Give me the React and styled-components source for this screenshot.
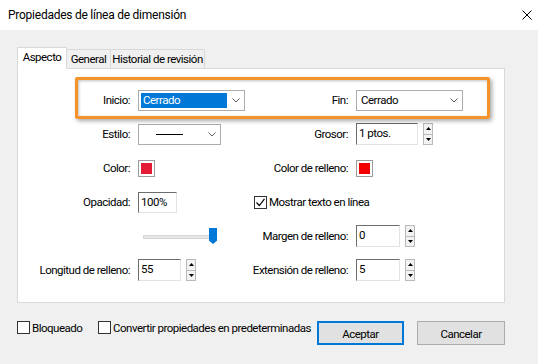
import React from 'react';
import styled, { createGlobalStyle } from 'styled-components';

const FONT = `"Roboto", "Liberation Sans", sans-serif`;

const Global = createGlobalStyle`
  html, body { margin: 0; padding: 0; background: #f0f0f0; }
  body { width: 538px; height: 364px; overflow: hidden; font-family: ${FONT}; font-size: 11.5px; letter-spacing: -0.5px; color: #000; }
  * { box-sizing: border-box; }
`;

const Window = styled.div`
  width: 538px;
  height: 364px;
  display: flex;
  flex-direction: column;
  background: #f0f0f0;
`;

const TitleBar = styled.div`
  height: 30px;
  flex: none;
  background: #fff;
  display: flex;
  align-items: center;
  justify-content: space-between;
  padding: 0 6px 0 8px;
  font-size: 12px;
  letter-spacing: -0.25px;
`;

const CloseBtn = styled.div`
  width: 10px;
  height: 10px;
  display: flex;
  align-items: center;
  justify-content: center;
  margin-bottom: 1px;
`;

const Content = styled.div`
  padding: 17px 33px 0 17px;
  display: flex;
  flex-direction: column;
`;

const TabRow = styled.div`
  display: flex;
  align-items: flex-end;
  height: 22px;
  position: relative;
  z-index: 1;
  margin-bottom: -1px;
`;

const Tab = styled.div`
  width: ${(p) => p.w}px;
  height: ${(p) => (p.active ? 22 : 20)}px;
  margin-left: ${(p) => (p.first ? 0 : -1)}px;
  border: 1px solid #d9d9d9;
  border-bottom: ${(p) => (p.active ? '1px solid #fff' : '1px solid #d9d9d9')};
  background: ${(p) => (p.active ? '#fff' : '#f0f0f0')};
  display: flex;
  align-items: center;
  justify-content: center;
  white-space: nowrap;
  padding-bottom: ${(p) => (p.active ? 3 : 0)}px;
  position: relative;
  z-index: ${(p) => (p.active ? 2 : 1)};
`;

const Panel = styled.div`
  height: 235px;
  background: #fff;
  border: 1px solid #d9d9d9;
  position: relative;
  padding-top: 20px;
`;

const Highlight = styled.div`
  position: absolute;
  left: 57px;
  top: 8px;
  width: 415px;
  height: 42px;
  border: 3px solid #f3932a;
  border-radius: 2px;
  box-shadow: 2px 2px 4px rgba(0, 0, 0, 0.35), inset 1px 1px 3px rgba(0, 0, 0, 0.25);
  pointer-events: none;
`;

const Grid = styled.div`
  display: grid;
  grid-template-columns: 112px 108px 94px 150px;
  grid-auto-rows: 22px;
  column-gap: 8px;
  row-gap: 12px;
`;

const Label = styled.div`
  justify-self: end;
  align-self: center;
  white-space: nowrap;
`;

const Cell = styled.div`
  display: flex;
  align-items: center;
  grid-column: ${(p) => p.span || 'auto'};
`;

const SelectBox = styled.div`
  width: ${(p) => p.w}px;
  height: 21px;
  border: 1px solid #acacac;
  background: #fff;
  display: flex;
  align-items: stretch;
`;

const SelectValue = styled.div`
  flex: 1;
  margin: 2px 0 2px 2px;
  padding-left: 2px;
  display: flex;
  align-items: center;
  background: ${(p) => (p.selected ? '#0078d7' : 'transparent')};
  color: ${(p) => (p.selected ? '#fff' : '#000')};
  justify-content: ${(p) => (p.center ? 'center' : 'flex-start')};
`;

const SelectArrow = styled.div`
  width: 17px;
  display: flex;
  align-items: center;
  justify-content: center;
`;

const LineSample = styled.div`
  width: 27px;
  height: 1px;
  background: #000;
  margin-right: 8px;
`;

const TextField = styled.div`
  width: ${(p) => p.w}px;
  height: ${(p) => p.h || 22}px;
  background: #fff;
  border-top: 1px solid #6d6d6d;
  border-left: 1px solid #6d6d6d;
  border-right: 1px solid #e3e3e3;
  border-bottom: 1px solid #e3e3e3;
  display: flex;
  align-items: flex-start;
  padding-left: 2px;
  padding-top: 2px;
`;

const Spinner = styled.div`
  width: 10px;
  height: 22px;
  margin-left: 5px;
  display: flex;
  flex-direction: column;
`;

const SpinBtn = styled.div`
  flex: 1;
  border: 1px solid #b9b9b9;
  background: #f3f3f3;
  margin-top: ${(p) => (p.down ? -1 : 0)}px;
  display: flex;
  align-items: center;
  justify-content: center;
`;

const Swatch = styled.div`
  width: 17px;
  height: 17px;
  border: 1px solid #9c9c9c;
  background: #fff;
  padding: 2px;
`;

const SwatchFill = styled.div`
  width: 100%;
  height: 100%;
  background: ${(p) => p.color};
`;

const CheckLabel = styled.label`
  display: flex;
  align-items: center;
  gap: 2px;
  white-space: nowrap;
  flex: none;
  width: ${(p) => (p.w ? `${p.w}px` : 'auto')};
  height: 13px;
`;

const Box = styled.span`
  width: 13px;
  height: 13px;
  flex: none;
  border: 1px solid #333;
  background: #fff;
  display: inline-flex;
  align-items: center;
  justify-content: center;
`;

const Slider = styled.div`
  position: relative;
  width: 76px;
  height: 22px;
  margin-left: 5px;
`;

const Track = styled.div`
  position: absolute;
  left: 0;
  top: 10px;
  width: 71px;
  height: 4px;
  background: #e7e7e7;
  border: 1px solid #d6d6d6;
`;

const Thumb = styled.div`
  position: absolute;
  left: 66px;
  top: 3px;
  width: 8px;
  height: 16px;
  background: #0078d7;
  clip-path: polygon(0 0, 100% 0, 100% 80%, 50% 100%, 0 80%);
`;

const Footer = styled.div`
  margin-top: 18px;
  display: flex;
  align-items: flex-start;
`;

const Spacer = styled.div`
  flex: 1;
`;

const Button = styled.div`
  width: ${(p) => p.w}px;
  height: 24px;
  flex: none;
  margin-left: ${(p) => p.ml || 0}px;
  background: #e1e1e1;
  border: 1px solid ${(p) => (p.primary ? '#0078d7' : '#adadad')};
  box-shadow: ${(p) => (p.primary ? 'inset 0 0 0 1px #0078d7' : 'none')};
  display: flex;
  align-items: center;
  justify-content: center;
  padding-top: 1px;
`;

const Chevron = () => (
  <svg width="8" height="5" viewBox="0 0 8 5">
    <path d="M0.5 0.5 L4 4 L7.5 0.5" fill="none" stroke="#606060" strokeWidth="1" />
  </svg>
);

const Tri = ({ down }) => (
  <svg width="5" height="3" viewBox="0 0 5 3">
    <path d={down ? 'M0 0 L5 0 L2.5 3 Z' : 'M0 3 L5 3 L2.5 0 Z'} fill="#000" />
  </svg>
);

const Check = () => (
  <svg width="11" height="11" viewBox="0 0 11 11">
    <path d="M1.5 5.5 L4.3 8.5 L9.5 1.8" fill="none" stroke="#000" strokeWidth="1.2" />
  </svg>
);

const Select = ({ w, value, selected, line }) => (
  <SelectBox w={w}>
    <SelectValue selected={selected} center={line}>
      {line ? <LineSample /> : value}
    </SelectValue>
    <SelectArrow>
      <Chevron />
    </SelectArrow>
  </SelectBox>
);

const SpinField = ({ w, value }) => (
  <>
    <TextField w={w}>{value}</TextField>
    <Spinner>
      <SpinBtn><Tri /></SpinBtn>
      <SpinBtn down><Tri down /></SpinBtn>
    </Spinner>
  </>
);

export default function App() {
  return (
    <>
      <Global />
      <Window>
        <TitleBar>
          <span>Propiedades de línea de dimensión</span>
          <CloseBtn>
            <svg width="10" height="10" viewBox="0 0 10 10">
              <path d="M0.5 0.5 L9.5 9.5 M9.5 0.5 L0.5 9.5" stroke="#000" strokeWidth="1" />
            </svg>
          </CloseBtn>
        </TitleBar>
        <Content>
          <TabRow>
            <Tab active first w={50}>Aspecto</Tab>
            <Tab w={45}>General</Tab>
            <Tab w={95}>Historial de revisión</Tab>
          </TabRow>
          <Panel>
            <Grid>
              <Label>Inicio:</Label>
              <Cell><Select w={107} value="Cerrado" selected /></Cell>
              <Label>Fin:</Label>
              <Cell><Select w={107} value="Cerrado" /></Cell>

              <Label>Estilo:</Label>
              <Cell><Select w={83} line /></Cell>
              <Label>Grosor:</Label>
              <Cell><SpinField w={62} value="1 ptos." /></Cell>

              <Label>Color:</Label>
              <Cell><Swatch><SwatchFill color="#e31b36" /></Swatch></Cell>
              <Label>Color de relleno:</Label>
              <Cell><Swatch><SwatchFill color="#f20000" /></Swatch></Cell>

              <Label>Opacidad:</Label>
              <Cell><TextField w={39} h={21}>100%</TextField></Cell>
              <Cell span="3 / 5">
                <CheckLabel><Box><Check /></Box>Mostrar texto en línea</CheckLabel>
              </Cell>

              <Cell span="2 / 3"><Slider><Track /><Thumb /></Slider></Cell>
              <Label>Margen de relleno:</Label>
              <Cell><SpinField w={44} value="0" /></Cell>

              <Label>Longitud de relleno:</Label>
              <Cell><SpinField w={43} value="55" /></Cell>
              <Label>Extensión de relleno:</Label>
              <Cell><SpinField w={44} value="5" /></Cell>
            </Grid>
            <Highlight />
          </Panel>
          <Footer>
            <CheckLabel w={81}><Box />Bloqueado</CheckLabel>
            <CheckLabel><Box />Convertir propiedades en predeterminadas</CheckLabel>
            <Spacer />
            <Button primary w={87}>Aceptar</Button>
            <Button w={88} ml={13}>Cancelar</Button>
          </Footer>
        </Content>
      </Window>
    </>
  );
}
